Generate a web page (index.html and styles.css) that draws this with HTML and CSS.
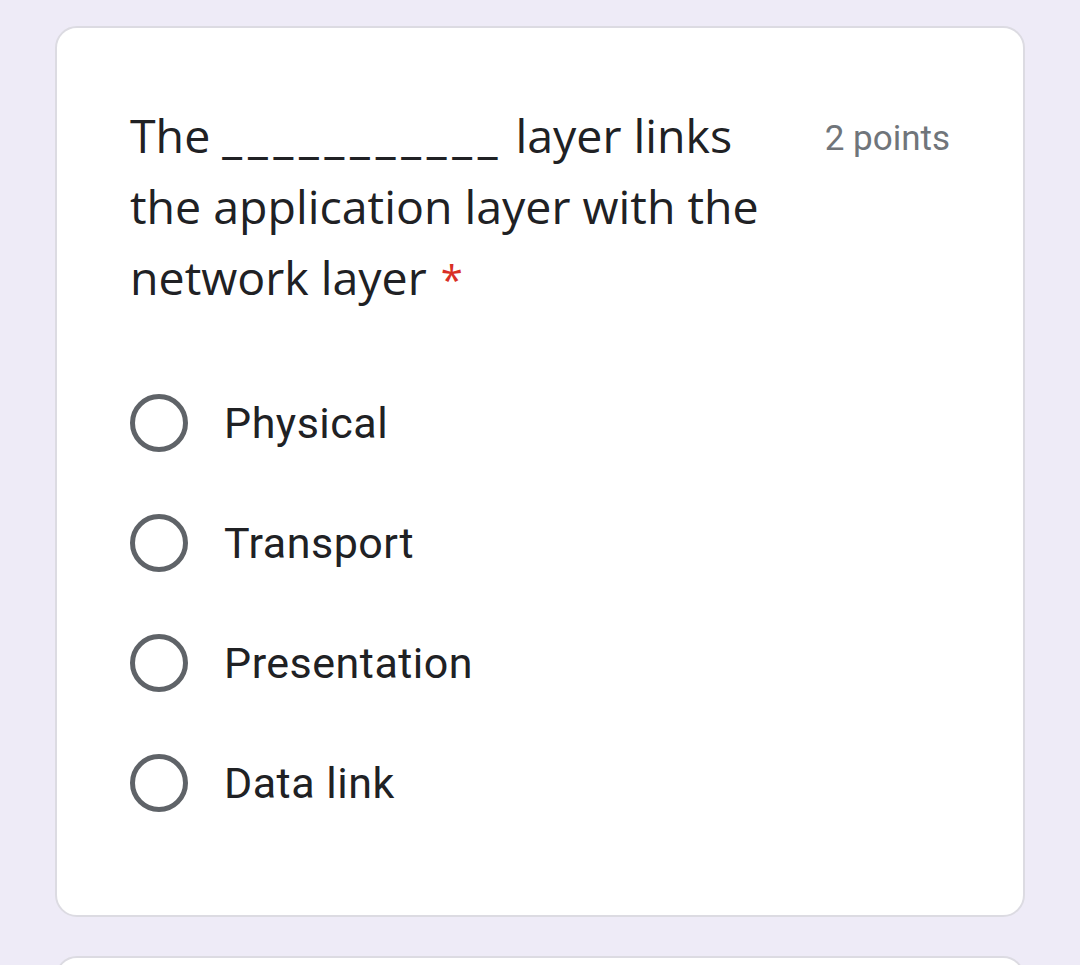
FILE: index.html
```html
<!DOCTYPE html>
<html>
<head>
<meta charset="utf-8">
<link rel="stylesheet" href="styles.css">
</head>
<body>
<div class="page">
  <section class="card">
    <div class="header">
      <div class="title">The <span class="blank">___________</span> layer links the application layer with the network layer<span class="req">*</span></div>
      <div class="points">2 points</div>
    </div>
    <div class="options">
      <label class="option"><span class="radio"></span><span class="label">Physical</span></label>
      <label class="option"><span class="radio"></span><span class="label">Transport</span></label>
      <label class="option"><span class="radio"></span><span class="label">Presentation</span></label>
      <label class="option"><span class="radio"></span><span class="label">Data link</span></label>
    </div>
  </section>
  <section class="card next"></section>
</div>
</body>
</html>
```

FILE: styles.css
```css
html, body {
  margin: 0;
  padding: 0;
  background: #eeebf7;
  overflow: hidden;
}
.page {
  padding: 26px 0 0 55px;
  width: 970px;
}
.card {
  box-sizing: border-box;
  background: #ffffff;
  border: 2px solid #dcdbe2;
  border-radius: 22px;
  height: 891px;
  padding: 72px 73px 0 73px;
}
.card.next {
  margin-top: 39px;
  height: 200px;
}
.header {
  display: flex;
  align-items: flex-start;
}
.title {
  flex: 1;
  font-family: "Open Sans", sans-serif;
  font-size: 46.5px;
  line-height: 71px;
  color: #202124;
}
.blank {
  letter-spacing: 5.8px;
  font-weight: 600;
}
.req {
  color: #d93025;
  font-size: 40px;
  margin-left: 14px;
}
.points {
  margin-left: 48px;
  margin-top: 18px;
  font-family: Roboto, sans-serif;
  font-size: 35px;
  color: #70757a;
  white-space: nowrap;
}
.options {
  margin-top: 79px;
  display: flex;
  flex-direction: column;
  gap: 62px;
}
.option {
  display: flex;
  align-items: center;
  height: 58px;
}
.radio {
  box-sizing: border-box;
  width: 58px;
  height: 58px;
  border: 5px solid #5f6368;
  border-radius: 50%;
  flex: none;
}
.label {
  margin-left: 36px;
  font-family: Roboto, sans-serif;
  font-size: 43px;
  color: #202124;
  letter-spacing: 0.5px;
}
```
